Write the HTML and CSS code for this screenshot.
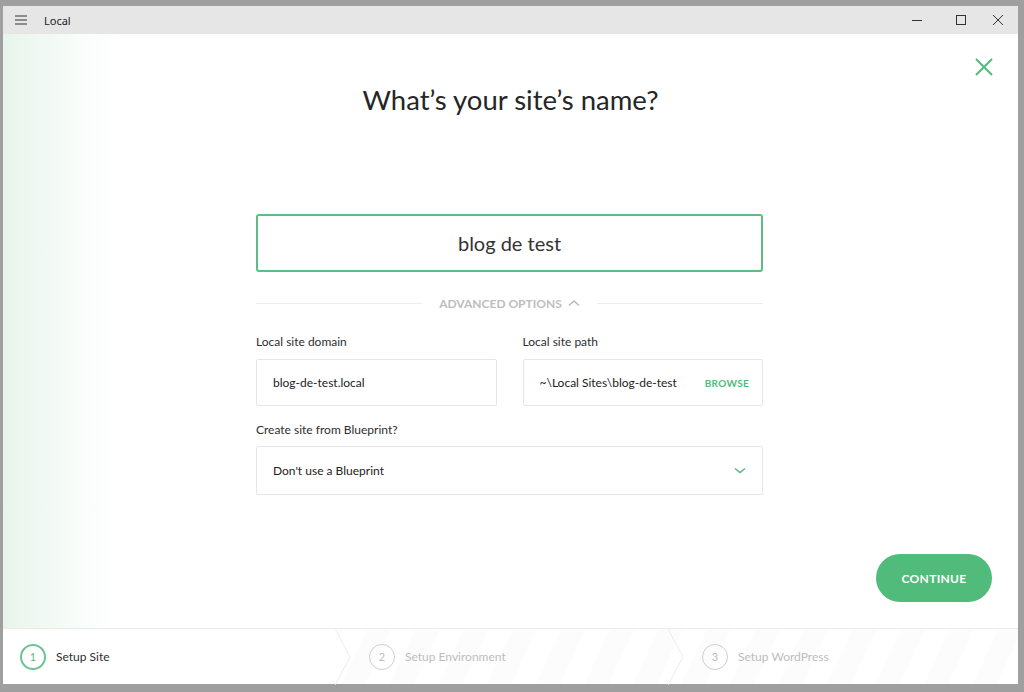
FILE: index.html
```html
<!DOCTYPE html>
<html lang="en">
<head>
    <meta charset="UTF-8">
    <title>Local</title>
    <link rel="stylesheet" href="styles.css">
</head>
<body>

<div class="window">
    <div class="titlebar">
        <div class="menu-icon">
            <svg width="12" height="10" viewBox="0 0 12 10"><path d="M0 1h12M0 5h12M0 9h12" stroke="#333" stroke-width="1.2"/></svg>
        </div>
        <div class="app-name">Local</div>
        <div class="win-controls">
            <span class="ctl min"><svg width="10" height="10" viewBox="0 0 10 10"><path d="M0 5.5h10" stroke="#333" stroke-width="1"/></svg></span>
            <span class="ctl max"><svg width="10" height="10" viewBox="0 0 10 10"><rect x="0.5" y="0.5" width="9" height="9" fill="none" stroke="#333" stroke-width="1"/></svg></span>
            <span class="ctl cls"><svg width="10" height="10" viewBox="0 0 10 10"><path d="M0 0l10 10M10 0L0 10" stroke="#333" stroke-width="1"/></svg></span>
        </div>
    </div>

    <div class="main">
        <a class="close-btn">
            <svg width="18" height="18" viewBox="0 0 18 18"><path d="M1 1l16 16M17 1L1 17" stroke="#51bb7b" stroke-width="2"/></svg>
        </a>

        <h1 class="title">What’s your site’s name?</h1>

        <div class="form">
            <div class="name-input">blog de test</div>

            <div class="advanced">
                <span class="line"></span>
                <span class="adv-label">ADVANCED OPTIONS
                    <svg width="12" height="8" viewBox="0 0 12 8"><path d="M1 6.5l5-4.5 5 4.5" fill="none" stroke="#bbb" stroke-width="1.6"/></svg>
                </span>
                <span class="line"></span>
            </div>

            <div class="row">
                <div class="field">
                    <label>Local site domain</label>
                    <div class="box">blog-de-test.local</div>
                </div>
                <div class="field">
                    <label>Local site path</label>
                    <div class="box">
                        <span>~\Local Sites\blog-de-test</span>
                        <span class="browse">BROWSE</span>
                    </div>
                </div>
            </div>

            <div class="field wide">
                <label>Create site from Blueprint?</label>
                <div class="box select">
                    <span>Don't use a Blueprint</span>
                    <svg width="12" height="7" viewBox="0 0 12 7"><path d="M1 1.5l5 4 5-4" fill="none" stroke="#51bb7b" stroke-width="1.6"/></svg>
                </div>
            </div>
        </div>

        <div class="actions">
            <button class="continue">CONTINUE</button>
        </div>
    </div>

    <div class="steps">
        <div class="step active">
            <span class="num">1</span>
            <span class="step-name">Setup Site</span>
            <svg class="chev" width="16" height="56" viewBox="0 0 16 56"><path d="M0 0l15 28L0 56" fill="none" stroke="#ececec" stroke-width="1"/></svg>
        </div>
        <div class="step">
            <span class="num">2</span>
            <span class="step-name">Setup Environment</span>
            <svg class="chev" width="16" height="56" viewBox="0 0 16 56"><path d="M0 0l15 28L0 56" fill="none" stroke="#ececec" stroke-width="1"/></svg>
        </div>
        <div class="step">
            <span class="num">3</span>
            <span class="step-name">Setup WordPress</span>
        </div>
    </div>
</div>

</body>
</html>
```

FILE: styles.css
```css
body {
    margin: 0;
    background: #9f9f9f;
    font-family: Lato, "Open Sans", sans-serif;
    color: #333;
}
.window {
    margin: 6px 6px 8px 3px;
    width: 1015px;
    height: 678px;
    display: flex;
    flex-direction: column;
    background: #fff;
}
.titlebar {
    height: 28px;
    background: #e6e6e6;
    display: flex;
    align-items: center;
    flex-shrink: 0;
}
.menu-icon { width: 12px; height: 10px; margin-left: 12px; display: flex; }
.app-name {
    margin-left: 17px;
    font-family: "Noto Sans", sans-serif;
    font-size: 11px;
    color: #222;
}
.win-controls { margin-left: auto; display: flex; height: 100%; }
.ctl {
    display: flex;
    align-items: center;
    justify-content: center;
}
.min { width: 45px; margin-right: 5px; }
.max { width: 34px; }
.cls { width: 40px; }

.main {
    flex: 1;
    position: relative;
    display: flex;
    flex-direction: column;
    background: linear-gradient(to right, #e7f4eb 0, #eef8f1 30px, #f6fbf8 65px, #fcfefd 95px, #fff 120px);
}
.close-btn {
    position: absolute;
    top: 24px;
    right: 25px;
    display: flex;
}
.title {
    margin: 50px 0 0;
    text-align: center;
    font-size: 27.5px;
    line-height: 32px;
    font-weight: 400;
    color: #262626;
}
.form {
    width: 507px;
    margin: 98px 0 0 253px;
    display: flex;
    flex-direction: column;
}
.name-input {
    height: 54px;
    border: 2px solid #5bbd80;
    border-radius: 3px;
    display: flex;
    align-items: center;
    justify-content: center;
    font-size: 20px;
    color: #333;
}
.advanced {
    margin-top: 21px;
    height: 20px;
    display: flex;
    align-items: center;
    gap: 17px;
}
.line { flex: 1; height: 1px; background: #ececec; }
.adv-label {
    font-size: 12px;
    font-weight: 700;
    color: #bdbdbd;
    display: flex;
    align-items: center;
    gap: 6px;
}
.row {
    margin-top: 21px;
    display: flex;
    gap: 26px;
}
.field { flex: 1; display: flex; flex-direction: column; }
.field label {
    font-size: 12px;
    line-height: 16px;
    color: #2e2e2e;
    margin-bottom: 9px;
}
.box {
    height: 45px;
    border: 1px solid #e6e6e6;
    border-radius: 2px;
    display: flex;
    align-items: center;
    justify-content: space-between;
    padding: 0 16px;
    font-size: 12px;
    color: #222;
}
.browse {
    font-size: 10px;
    font-weight: 700;
    letter-spacing: 0.3px;
    color: #51bb7b;
    margin-right: -3px;
}
.wide { margin-top: 16px; }
.wide label { margin-bottom: 8px; }
.select { height: 47px; padding-right: 16px; }

.actions {
    margin-top: auto;
    display: flex;
    justify-content: flex-end;
    padding: 0 26px 26px 0;
}
.continue {
    width: 116px;
    height: 48px;
    border: none;
    border-radius: 24px;
    background: #51bb7b;
    color: #fff;
    font-family: Lato, sans-serif;
    font-weight: 700;
    font-size: 12px;
    letter-spacing: 0.3px;
}

.steps {
    height: 55px;
    border-top: 1px solid #ececec;
    display: flex;
    flex-shrink: 0;
    background: repeating-linear-gradient(115deg, #fff 0 22px, #fcfcfc 22px 44px);
}
.step {
    width: 333px;
    position: relative;
    display: flex;
    align-items: center;
    padding-left: 33px;
    box-sizing: border-box;
    color: #bdbdbd;
    font-size: 12px;
}
.step:last-child { flex: 1; }
.step.active { padding-left: 17px; color: #2e2e2e; background: #fff; }
.num {
    width: 24px;
    height: 24px;
    border: 1px solid #cfcfcf;
    border-radius: 50%;
    display: flex;
    align-items: center;
    justify-content: center;
    font-size: 11px;
    color: #bdbdbd;
    margin-right: 10px;
}
.step.active .num { border: 2px solid #6cc590; width: 22px; height: 22px; color: #51bb7b; }
.chev { position: absolute; right: -15px; top: 0; z-index: 1; }
```
